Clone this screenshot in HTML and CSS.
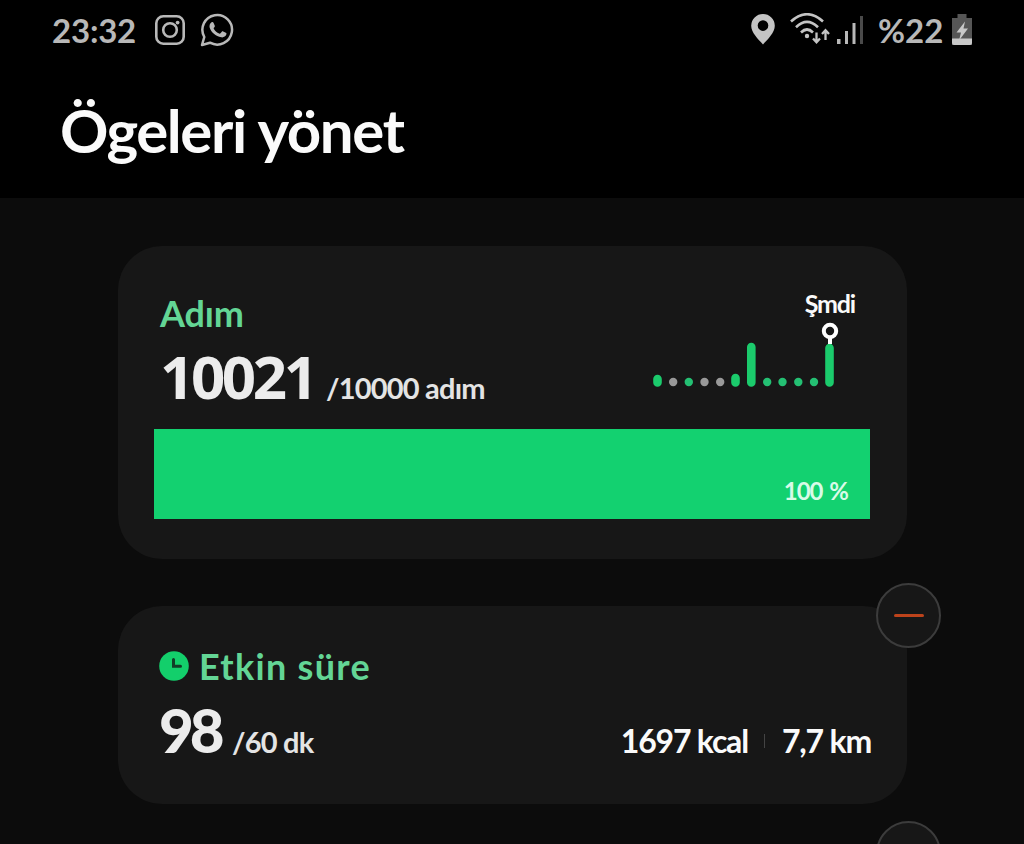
FILE: index.html
```html
<!DOCTYPE html>
<html lang="tr">
<head>
  <meta charset="UTF-8">
  <title>Ögeleri yönet</title>
  <link rel="stylesheet" href="styles.css">
</head>
<body>
  <header class="header">
    <div class="status-bar">
      <div class="status-left">
        <span class="time">23:32</span>
        <svg class="icon-instagram" width="30" height="30" viewBox="0 0 30 30" fill="none" stroke="#b8b8b8" stroke-width="2.6">
          <rect x="1.3" y="1.3" width="27.4" height="27.4" rx="7"/>
          <circle cx="15" cy="15" r="6.8"/>
          <circle cx="22.6" cy="7.6" r="1.9" fill="#b8b8b8" stroke="none"/>
        </svg>
        <svg class="icon-whatsapp" width="34" height="34" viewBox="0 0 34 34">
          <path d="M2 32l2.3-8A14.8 14.8 0 1 1 10 29.7z" fill="none" stroke="#b8b8b8" stroke-width="2.5" stroke-linejoin="round"/>
          <path d="M11.6 9.2c.9-.4 1.7-.1 2 .7l1.2 2.8c.2.6 0 1-.9 2.1-.4.5-.3.8 0 1.3 1.3 2.1 3 3.5 5.2 4.5.6.3 1 .2 1.4-.3l1.3-1.6c.4-.5.8-.6 1.4-.3l2.6 1.3c.8.4.8.9.5 1.9-.7 2.1-3 3.1-5 2.7-5.6-1-10.3-5.2-11.6-9.5-.6-2.2.2-4.7 1.9-5.6z" fill="#b8b8b8"/>
        </svg>
      </div>
      <div class="status-right">
        <svg class="icon-pin" width="24" height="31" viewBox="0 0 24 31">
          <path fill="#c4c4c4" fill-rule="evenodd" d="M12 0a11.8 11.8 0 0 1 11.8 11.8C23.8 18.5 17 25 12 30.5 7 25 .2 18.5.2 11.8A11.8 11.8 0 0 1 12 0zm0 6.3a5.3 5.3 0 1 0 0 10.6 5.3 5.3 0 0 0 0-10.6z"/>
        </svg>
        <svg class="icon-wifi" width="40" height="32" viewBox="0 0 40 32" fill="none" stroke="#c4c4c4" stroke-width="2.6">
          <path d="M1 8.5Q17-6 33 8.5M6 14.2Q17 3.5 28 14.2M11 19.5Q17 13.5 23 19.5"/>
          <circle cx="17" cy="23" r="2.2" fill="#c4c4c4" stroke="none"/>
          <path d="M26.5 19.5v9M23 25.5l3.5 3.8 3.5-3.8M35.5 27v-9M32 21l3.5-3.8L39 21" stroke-width="2.3"/>
        </svg>
        <svg class="icon-signal" width="26" height="30" viewBox="0 0 26 30">
          <path fill="#b8b8b8" d="M0 24h3.5v5H0zM8 16h3v13H8zM15.5 8h3v21h-3z"/>
          <path fill="#4a4a4a" d="M23 1h3v28h-3z"/>
        </svg>
        <span class="percent">%22</span>
        <svg class="icon-battery" width="20" height="31" viewBox="0 0 20 31">
          <path fill="#565656" d="M5.5 0h9v4H20v27H0V4h5.5z"/>
          <path fill="#c8c8c8" d="M0 24.5h20V29a2 2 0 0 1-2 2H2a2 2 0 0 1-2-2z"/>
          <path fill="#c8c8c8" d="M13 7.5L4.5 18.500H9L7 26.500l9-12h-4.500z"/>
        </svg>
      </div>
    </div>
    <h1 class="page-title">Ögeleri yönet</h1>
  </header>

  <main class="items">
    <section class="card steps">
      <div class="steps-head">
        <div>
          <h2 class="card-title steps-title">Adım</h2>
          <div class="value-row">
            <span class="value steps-value">10021</span>
            <span class="goal steps-goal">/10000 adım</span>
          </div>
        </div>
        <div class="chart">
          <span class="now">Şmdi</span>
          <svg class="chart-bars" width="182" height="65" viewBox="0 0 182 65">
            <g stroke="#1bcb6c" stroke-width="8.6" stroke-linecap="round">
              <path d="M4.5 57v3.5M82.5 56v4.5M98.3 25v35.5M176.5 26v34.5"/>
            </g>
            <g fill="#24c073">
              <circle cx="35.8" cy="60" r="4.2"/>
              <circle cx="114.2" cy="60" r="4.2"/>
              <circle cx="129.5" cy="60" r="4.2"/>
              <circle cx="145.3" cy="60" r="4.2"/>
              <circle cx="161" cy="60" r="4.2"/>
            </g>
            <g fill="#999">
              <circle cx="20.2" cy="60" r="4.2"/>
              <circle cx="51.5" cy="60" r="4.2"/>
              <circle cx="67.2" cy="60" r="4.2"/>
            </g>
          </svg>
          <svg class="now-pin" width="18" height="22" viewBox="0 0 18 22">
            <path d="M9 16v6" stroke="#fff" stroke-width="4"/>
            <circle cx="9" cy="9" r="6.2" fill="#171717" stroke="#fff" stroke-width="4"/>
          </svg>
        </div>
      </div>
      <div class="progress">100 %</div>
    </section>

    <section class="card active">
      <button class="remove" aria-label="Kaldır"></button>
      <h2 class="card-title active-title">
        <svg width="30" height="30" viewBox="0 0 30 30">
          <circle cx="15" cy="15" r="14.8" fill="#13cf6b"/>
          <path d="M14.5 8.5v6.8h7" fill="none" stroke="#123d27" stroke-width="3" stroke-linecap="round"/>
        </svg>
        <span>Etkin süre</span>
      </h2>
      <div class="active-row">
        <div class="value-row">
          <span class="value active-value">98</span>
          <span class="goal active-goal">/60 dk</span>
        </div>
        <div class="stats">
          <span class="kcal">1697 kcal</span>
          <span class="divider"></span>
          <span class="km">7,7 km</span>
        </div>
      </div>
    </section>

    <section class="card next">
      <button class="remove" aria-label="Kaldır"></button>
    </section>
  </main>
</body>
</html>
```
FILE: styles.css
```css
* {
  box-sizing: border-box;
}

body {
  margin: 0;
  height: 844px;
  overflow: hidden;
  display: flex;
  flex-direction: column;
  background: #0c0c0c;
  color: #fafafa;
  font-family: Lato, "Open Sans", sans-serif;
}

h1,
h2 {
  margin: 0;
}

svg {
  display: block;
  flex-shrink: 0;
}

.header {
  height: 198px;
  flex-shrink: 0;
  background: #000;
}

.status-bar {
  height: 59px;
  padding: 0 52px;
  display: flex;
  justify-content: space-between;
  align-items: center;
  color: #b8b8b8;
}

.status-left,
.status-right {
  display: flex;
  align-items: center;
}

.time {
  width: 103px;
  font-size: 33px;
  font-weight: 700;
  letter-spacing: -0.2px;
}

.icon-whatsapp {
  margin-left: 15px;
}

.icon-pin {
  margin-bottom: 1px;
}

.icon-wifi {
  margin-left: 15px;
  margin-bottom: 2px;
}

.icon-signal {
  margin-left: 7px;
}

.percent {
  width: 74px;
  margin-left: 15px;
  font-size: 33px;
  font-weight: 700;
}

.page-title {
  padding-left: 60px;
  font-size: 60px;
  line-height: 72px;
  padding-top: 35px;
  font-weight: 700;
  letter-spacing: -1.4px;
  white-space: nowrap;
}

.items {
  height: 646px;
  overflow: hidden;
  padding: 48px 117px 0 118px;
  display: flex;
  flex-direction: column;
  gap: 47px;
}

.card {
  position: relative;
  flex-shrink: 0;
  border-radius: 44px;
  background: #171717;
}

.steps {
  height: 313px;
  padding: 42px 37px 0 36px;
}

.steps-head {
  height: 141px;
  padding-left: 6px;
  display: flex;
  justify-content: space-between;
}

.card-title {
  color: #63d595;
  font-size: 36px;
  line-height: 50px;
  font-weight: 700;
}

.steps-title {
  letter-spacing: -0.2px;
}

.value-row {
  display: flex;
  align-items: baseline;
  white-space: nowrap;
}

.value {
  font-size: 60px;
  line-height: 76px;
  font-weight: 700;
  color: #ececec;
}

.steps-value {
  width: 166px;
  font-family: "Noto Sans", sans-serif;
  letter-spacing: -3.4px;
}

.goal {
  padding-bottom: 1px;
  color: #e4e4e4;
  font-size: 29px;
  font-weight: 700;
  letter-spacing: -0.8px;
}

.chart {
  position: relative;
  width: 217px;
  display: flex;
  flex-direction: column;
}

.now {
  align-self: flex-end;
  margin-right: 15px;
  font-size: 25px;
  line-height: 30px;
  font-weight: 700;
  letter-spacing: -1.2px;
}

.chart-bars {
  margin-top: 4px;
}

.now-pin {
  position: absolute;
  left: 168px;
  top: 34px;
}

.progress {
  height: 90px;
  padding: 47px 22px 0 0;
  background: #13d170;
  color: #d8fbe7;
  font-size: 24px;
  line-height: 30px;
  font-weight: 700;
  letter-spacing: -1px;
  word-spacing: 2px;
  text-align: right;
}

.active {
  height: 198px;
  padding: 35px 36px 0 41px;
}

.active-title {
  display: flex;
  align-items: center;
  gap: 10px;
  letter-spacing: 1.3px;
}

.active-row {
  padding-top: 1px;
  display: flex;
  justify-content: space-between;
  align-items: baseline;
}

.active-value {
  width: 73px;
  font-weight: 900;
  letter-spacing: -4px;
}

.stats {
  display: flex;
  align-items: center;
  font-size: 32px;
  font-weight: 700;
  letter-spacing: -1.2px;
  white-space: nowrap;
}

.divider {
  width: 1px;
  height: 14px;
  margin: 0 17px 0 16px;
  background: #444;
}

.remove {
  position: absolute;
  top: -23px;
  right: -34px;
  width: 65px;
  height: 65px;
  padding: 0;
  display: flex;
  align-items: center;
  justify-content: center;
  border: 2px solid #3c3c3c;
  border-radius: 50%;
  background: #171717;
}

.remove::before {
  content: "";
  width: 30px;
  height: 3px;
  border-radius: 2px;
  background: #bd431b;
}

.next {
  height: 0;
}

.next .remove {
  top: -30px;
}
```
